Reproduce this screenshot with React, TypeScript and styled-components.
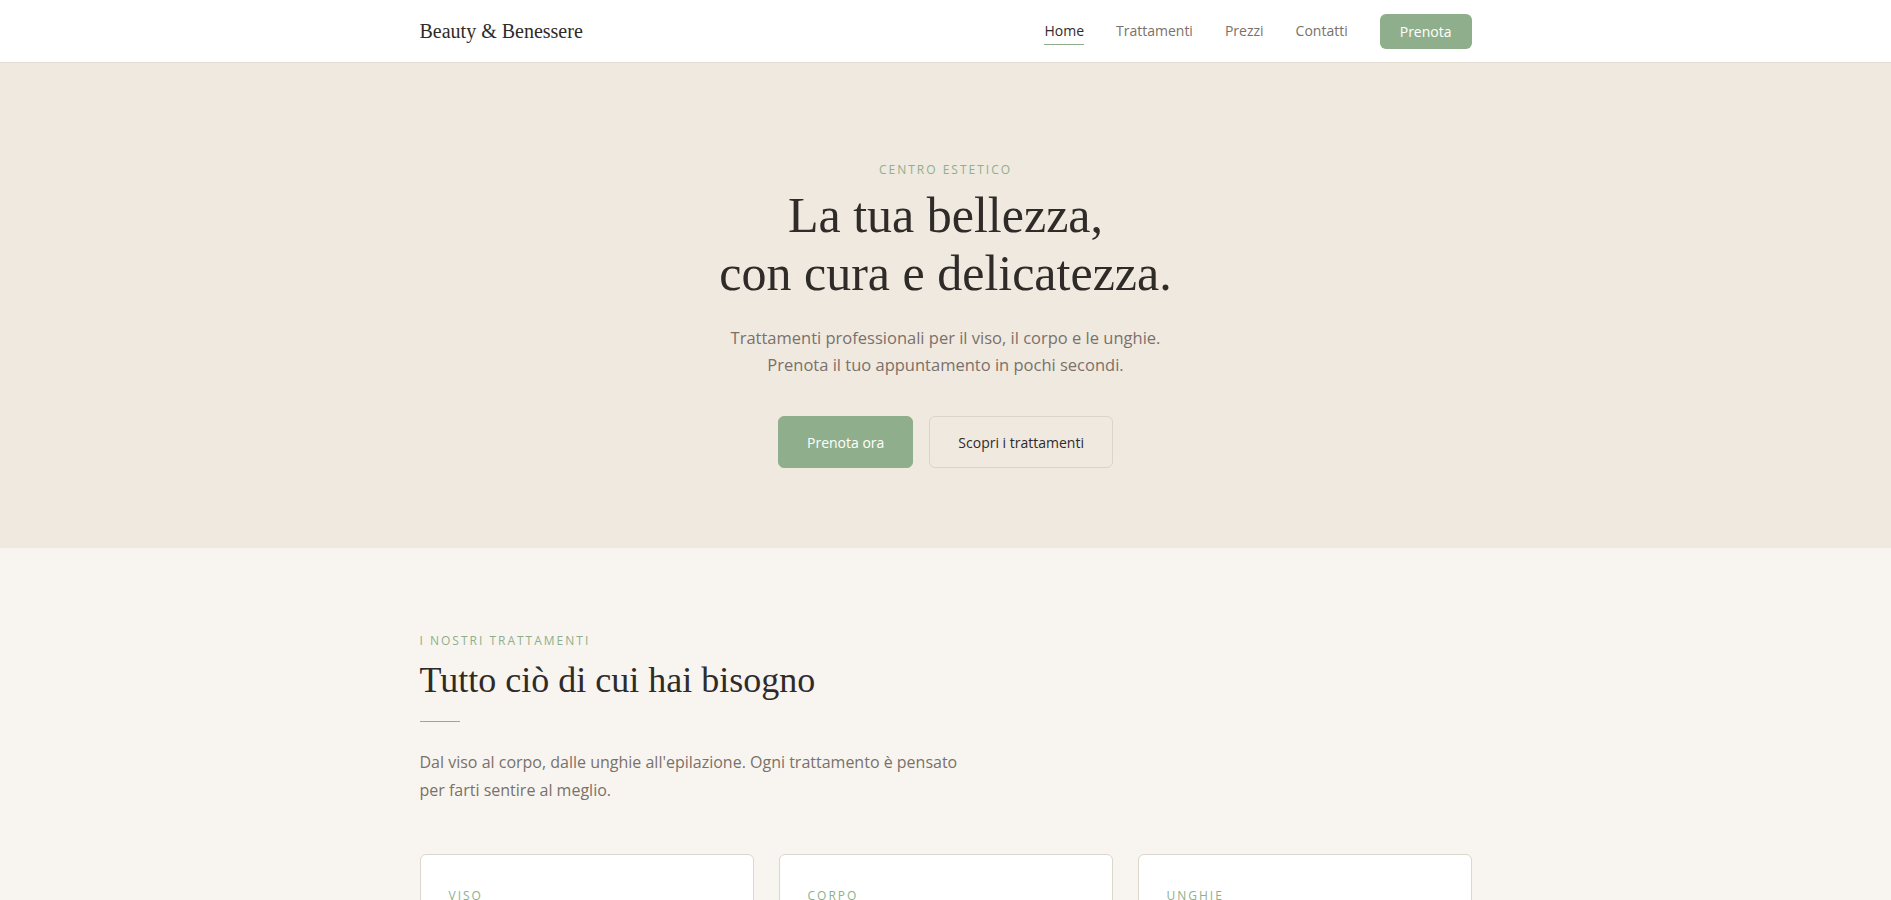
import React from "react";
import styled, { createGlobalStyle } from "styled-components";

const Global = createGlobalStyle`
  body { margin: 0; font-family: "Open Sans", "Noto Sans", sans-serif; background: #f8f5f0; color: #333; }
`;
const sage = "#8faf8c";
const serif = `"Liberation Serif", Georgia, serif`;

const Nav = styled.header`
  height: 62px; background: #fff; border-bottom: 1px solid #e4ddd3;
`;
const Container = styled.div`
  max-width: 1052px; margin: 0 auto; height: 100%;
`;
const NavInner = styled(Container)`
  display: flex; align-items: center; justify-content: space-between;
`;
const Logo = styled.div`
  font-family: ${serif}; font-size: 20px; color: #2f2b28;
`;
const Links = styled.nav`
  display: flex; align-items: center; gap: 32px;
`;
const Link = styled.a<{ $active?: boolean }>`
  font-size: 14px; color: ${p => (p.$active ? "#2f2b28" : "#7a716a")};
  padding: 4px 0; border-bottom: 1.5px solid ${p => (p.$active ? sage : "transparent")};
  text-decoration: none;
`;
const NavBtn = styled.a`
  background: ${sage}; color: #fff; font-size: 14px; padding: 8px 20px; border-radius: 6px;
`;
const Hero = styled.section`
  background: #f0e9e0; padding: 98px 0 80px; text-align: center;
`;
const Eyebrow = styled.div<{ $left?: boolean }>`
  font-size: 12px; letter-spacing: 2px; color: ${sage}; text-transform: uppercase;
  text-align: ${p => (p.$left ? "left" : "center")};
`;
const H1 = styled.h1`
  font-family: ${serif}; font-weight: 400; font-size: 50px; line-height: 58px; margin: 8px 0 22px; color: #2f2b28;
`;
const Sub = styled.p`
  font-size: 16.5px; line-height: 27px; color: #7a716a; margin: 0 0 38px;
`;
const Btns = styled.div`
  display: flex; justify-content: center; gap: 16px;
`;
const Btn = styled.a<{ $primary?: boolean }>`
  height: 50px; display: flex; align-items: center; padding: 0 28px; border-radius: 6px; font-size: 14px;
  background: ${p => (p.$primary ? sage : "transparent")};
  color: ${p => (p.$primary ? "#fff" : "#2f2b28")};
  border: 1px solid ${p => (p.$primary ? sage : "#dcd4c9")};
`;
const Section = styled.section`
  padding: 84px 0 0;
`;
const H2 = styled.h2`
  font-family: ${serif}; font-weight: 400; font-size: 36px; color: #2f2b28; margin: 10px 0 20px;
`;
const Rule = styled.div`
  width: 40px; height: 1px; background: ${sage}; margin-bottom: 26px;
`;
const Para = styled.p`
  font-size: 16px; line-height: 28px; color: #7a716a; margin: 0 0 50px; max-width: 560px;
`;
const Cards = styled.div`
  display: grid; grid-template-columns: repeat(3, 1fr); gap: 25px;
`;
const Card = styled.div`
  background: #fff; border: 1px solid #ddd6cc; border-radius: 6px; padding: 32px 28px 40px; height: 120px;
`;
const CardTitle = styled.div`
  font-family: ${serif}; font-size: 26px; color: #2f2b28; margin-top: 10px;
`;

export default function App() {
  return (
    <>
      <Global />
      <Nav>
        <NavInner>
          <Logo>Beauty &amp; Benessere</Logo>
          <Links>
            <Link $active>Home</Link>
            <Link>Trattamenti</Link>
            <Link>Prezzi</Link>
            <Link>Contatti</Link>
            <NavBtn>Prenota</NavBtn>
          </Links>
        </NavInner>
      </Nav>
      <Hero>
        <Eyebrow>Centro estetico</Eyebrow>
        <H1>La tua bellezza,<br />con cura e delicatezza.</H1>
        <Sub>Trattamenti professionali per il viso, il corpo e le unghie.<br />Prenota il tuo appuntamento in pochi secondi.</Sub>
        <Btns>
          <Btn $primary>Prenota ora</Btn>
          <Btn>Scopri i trattamenti</Btn>
        </Btns>
      </Hero>
      <Section>
        <Container>
          <Eyebrow $left>I nostri trattamenti</Eyebrow>
          <H2>Tutto ciò di cui hai bisogno</H2>
          <Rule />
          <Para>Dal viso al corpo, dalle unghie all'epilazione. Ogni trattamento è pensato per farti sentire al meglio.</Para>
          <Cards>
            <Card><Eyebrow $left>Viso</Eyebrow><CardTitle>Pulizia del viso</CardTitle></Card>
            <Card><Eyebrow $left>Corpo</Eyebrow><CardTitle>Massaggio</CardTitle></Card>
            <Card><Eyebrow $left>Unghie</Eyebrow><CardTitle>Manicure</CardTitle></Card>
          </Cards>
        </Container>
      </Section>
    </>
  );
}
